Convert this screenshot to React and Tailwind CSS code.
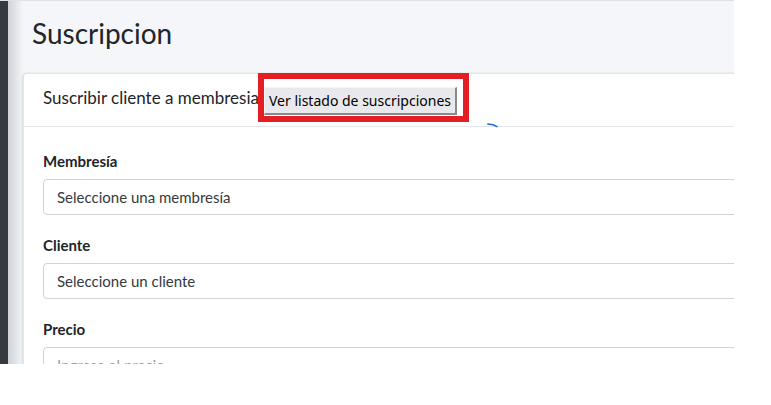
import React from "react";

const sans = { fontFamily: '"Source Sans Pro", Lato, "Noto Sans", sans-serif' };

function Field({ label, text, placeholder, last }) {
  return (
    <div className={last ? "" : "mb-[20px]"}>
      <div className="h-[20px] mb-[8px] flex items-center text-[15px] font-bold text-[#212529] leading-[20px]">
        {label}
      </div>
      <div className="h-[36px] border border-[#ced4da] rounded-[4px] bg-white flex items-center pl-[13px] text-[15px]">
        {placeholder ? (
          <span className="text-[#9aa0a6]">{text}</span>
        ) : (
          <span className="text-[#343a40]">{text}</span>
        )}
      </div>
    </div>
  );
}

export default function App() {
  return (
    <div className="w-[771px] h-[405px] bg-white" style={sans}>
      <div className="w-[734px] h-[364px] overflow-hidden flex bg-[#f4f6f9] border-t border-[#dee2e6]">
        <div className="w-[8px] shrink-0 bg-[#343a40]" />
        <div className="w-[15px] shrink-0 bg-gradient-to-r from-[#cfd2d6] to-[#f4f6f9]" />
        <div className="flex-1 min-w-0">
          <div className="h-[72px] pl-[9px] pt-[14px]">
            <h1 className="text-[28px] leading-[36px] text-[#212529] font-normal">Suscripcion</h1>
          </div>
          <div className="w-[760px] bg-white rounded-[4px] border-t border-l border-[#e3e6ea] shadow-[0_0_1px_rgba(0,0,0,0.125),0_1px_3px_rgba(0,0,0,0.2)]">
            <div className="relative h-[53px] border-b border-[#e3e6ea] flex items-center pl-[19px]">
              <span className="w-[221px] shrink-0 whitespace-nowrap mb-[4px] text-[17px] text-[#212529]">
                Suscribir cliente a membresia
              </span>
              <button
                className="relative mt-[1px] h-[28px] px-[4px] bg-[#e9e9ed] text-[14px] text-black border-t border-l border-[#f5f5f7] border-r-2 border-b-2 border-r-[#8a8a8a] border-b-[#8a8a8a]"
                style={{ fontFamily: '"Noto Sans", "Open Sans", sans-serif' }}
              >
                Ver listado de suscripciones
              </button>
              <div className="absolute left-[234px] top-[-1px] w-[211px] h-[49px] border-[6px] border-[#e31e24] pointer-events-none" />
              <svg className="absolute left-[463px] top-[49px]" width="11" height="5" viewBox="0 0 11 5">
                <path d="M0.8 1 L6 1.8 L10 3.6" stroke="#1a6fd1" strokeWidth="1.5" fill="none" strokeLinecap="round" />
              </svg>
            </div>
            <div className="pt-[24px] pl-[19px] pb-[20px]">
              <Field label="Membresía" text="Seleccione una membresía" />
              <Field label="Cliente" text="Seleccione un cliente" />
              <Field label="Precio" text="Ingrese el precio" placeholder last />
            </div>
          </div>
        </div>
      </div>
    </div>
  );
}
